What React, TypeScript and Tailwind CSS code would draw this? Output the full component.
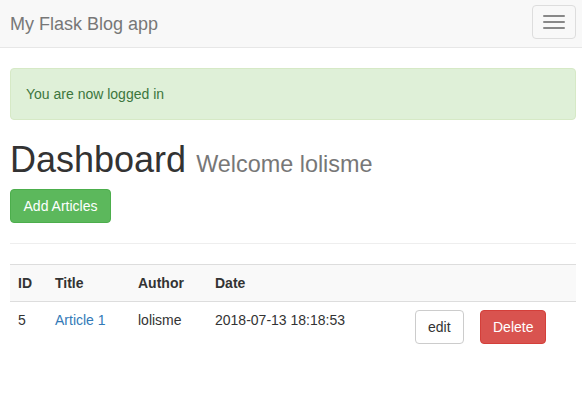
export default function App() {
  return (
    <div className="min-h-[409px] bg-white text-[14px] leading-[20px] text-[#333]" style={{ fontFamily: '"Liberation Sans", Arial, sans-serif' }}>
      <nav className="h-[48px] bg-[#f8f8f8] border-b border-[#e7e7e7] flex items-start justify-between">
        <a className="pl-[10px] pt-[14px] text-[18px] leading-[20px] text-[#777]">My Flask Blog app</a>
        <button className="mt-[5px] mr-[6px] w-[44px] h-[34px] border border-[#ddd] rounded-[4px] flex flex-col items-center justify-center gap-[4px]">
          <span className="block w-[22px] h-[2px] bg-[#888] rounded-[1px]" />
          <span className="block w-[22px] h-[2px] bg-[#888] rounded-[1px]" />
          <span className="block w-[22px] h-[2px] bg-[#888] rounded-[1px]" />
        </button>
      </nav>
      <div className="px-[10px] pt-[20px] w-[586px]">
        <div className="w-[566px] h-[52px] bg-[#dff0d8] border border-[#d6e9c6] rounded-[4px] text-[#3c763d] px-[15px] py-[15px]">You are now logged in</div>
        <h1 className="mt-[20px] h-[39px] text-[36px] leading-[39.6px] font-normal text-[#333]">
          Dashboard <small className="text-[23.4px] leading-none text-[#777]">Welcome lolisme</small>
        </h1>
        <button className="block mt-[10px] h-[34px] w-[101px] bg-[#5cb85c] border border-[#4cae4c] rounded-[4px] text-white text-[14px]">Add Articles</button>
        <hr className="mt-[20px] mb-[20px] w-[566px] border-0 border-t border-[#eee]" />
        <table className="w-[566px] border-collapse text-left">
          <tbody>
            <tr className="bg-[#f9f9f9] border-t border-[#ddd]">
              <th className="w-[37px] p-[8px] font-bold align-top">ID</th>
              <th className="w-[83px] p-[8px] font-bold align-top">Title</th>
              <th className="w-[77px] p-[8px] font-bold align-top">Author</th>
              <th className="w-[200px] p-[8px] font-bold align-top">Date</th>
              <th className="w-[65px] p-[8px]"></th>
              <th className="p-[8px]"></th>
            </tr>
            <tr className="border-t border-[#ddd]">
              <td className="p-[8px] align-top">5</td>
              <td className="p-[8px] align-top"><a className="text-[#337ab7]">Article 1</a></td>
              <td className="p-[8px] align-top">lolisme</td>
              <td className="p-[8px] align-top">2018-07-13 18:18:53</td>
              <td className="p-[8px] align-top">
                <button className="h-[34px] px-[12px] bg-white border border-[#ccc] rounded-[4px] text-[#333]">edit</button>
              </td>
              <td className="p-[8px] align-top">
                <button className="h-[34px] px-[12px] bg-[#d9534f] border border-[#d43f3a] rounded-[4px] text-white">Delete</button>
              </td>
            </tr>
          </tbody>
        </table>
      </div>
    </div>
  );
}
